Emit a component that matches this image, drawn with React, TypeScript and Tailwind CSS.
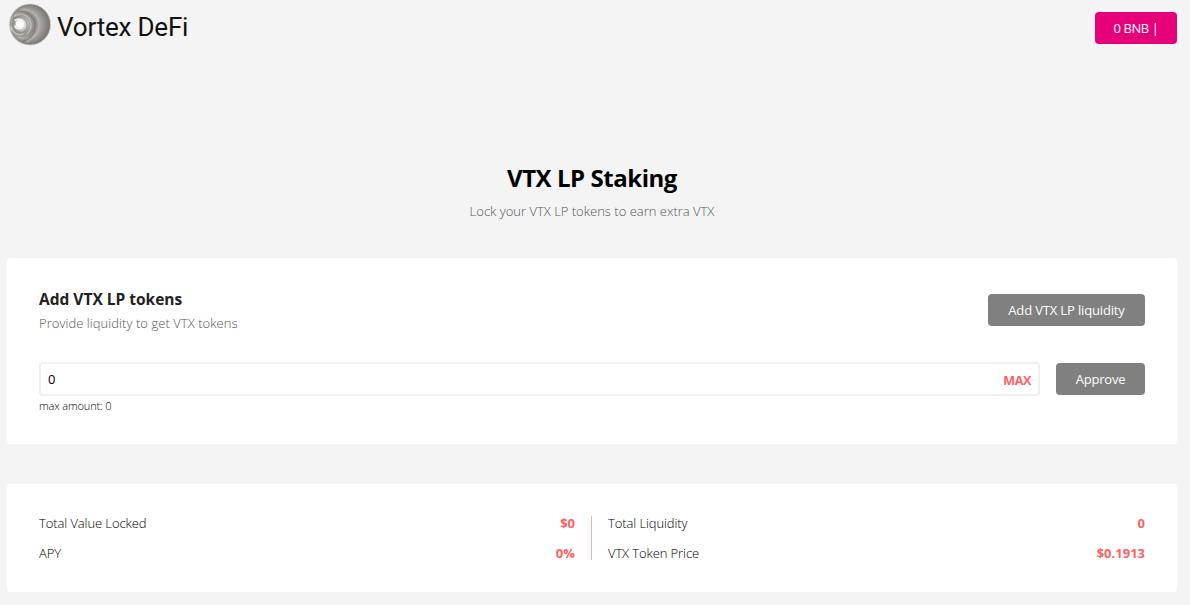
import { useState } from "react";

function Logo() {
  return (
    <svg width="44" height="44" viewBox="0 0 44 44" fill="none">
      <defs>
        <radialGradient id="sphere" cx="21" cy="21.5" r="21" fx="10.5" fy="21" gradientUnits="userSpaceOnUse">
          <stop offset="0" stopColor="#ffffff" />
          <stop offset="0.2" stopColor="#e0dfdc" />
          <stop offset="0.38" stopColor="#a19e9b" />
          <stop offset="0.52" stopColor="#8d8a87" />
          <stop offset="0.68" stopColor="#aaa8a3" />
          <stop offset="0.86" stopColor="#8d8a86" />
          <stop offset="1" stopColor="#777471" />
        </radialGradient>
      </defs>
      <circle cx="22" cy="21.5" r="20.6" fill="url(#sphere)" stroke="#d4d4d4" strokeWidth="0.8" />
      <g strokeLinecap="round" strokeOpacity="0.5">
        <path d="M7 13c8-5 16 1 16 9s-6 12-12 12" stroke="#d9d7d4" strokeWidth="1.6" />
        <path d="M9 9c9-3 18 4 18 13s-5 14-12 16" stroke="#6f6c6a" strokeWidth="1.4" />
        <path d="M14 6c9 0 17 7 17 16s-6 14-12 17" stroke="#c3c0bc" strokeWidth="1.6" />
        <path d="M5 16c6-4 13-1 14 5s-4 10-9 9" stroke="#7c7976" strokeWidth="1.2" />
        <path d="M3 24c1 6 7 9 12 7" stroke="#f0efed" strokeWidth="1.6" />
        <path d="M4 28c4 5 9 7 14 4" stroke="#7c7976" strokeWidth="1.2" />
      </g>
      <path d="M7 17c5-2 9 1 8 5s-7 5-8 1" stroke="#fff" strokeOpacity="0.8" strokeWidth="1.6" strokeLinecap="round" />
      <circle cx="11" cy="21" r="3.2" fill="#fff" fillOpacity="0.9" />
    </svg>
  );
}

function Stat({ label, value }: { label: string; value: string }) {
  return (
    <div className="flex h-[22px] items-center justify-between">
      <span className="font-light tracking-[-0.1px] text-black">{label}</span>
      <span className="font-bold text-[#ff6060]">{value}</span>
    </div>
  );
}

export default function App() {
  const [amount, setAmount] = useState("0");

  return (
    <div className="h-[605px] overflow-hidden bg-[#f4f4f4] pr-[13px] pl-[7px] font-['Open_Sans',sans-serif] text-[13px] leading-5 text-[#222]">
      <header className="flex h-[52px] items-start justify-between">
        <div className="flex items-start gap-[5px] pt-[3px] pl-px">
          <Logo />
          <span className="pt-px font-[Roboto,sans-serif] text-[26px] leading-[46px] tracking-[-0.2px] text-[#111]">
            Vortex DeFi
          </span>
        </div>
        <button className="mt-3 h-8 w-[82px] rounded bg-[#e6007a] tracking-[-0.4px] text-white">0 BNB |</button>
      </header>

      <div className="h-[206px] pt-[110px] text-center">
        <h1 className="text-2xl leading-8 font-bold tracking-[-0.45px] text-black">VTX LP Staking</h1>
        <p className="mt-[7px] font-light text-[#555]">Lock your VTX LP tokens to earn extra VTX</p>
      </div>

      <section className="h-[186px] rounded bg-white px-8 pt-[31px]">
        <div className="flex justify-between">
          <div>
            <h2 className="text-[15.5px] leading-5 font-bold">Add VTX LP tokens</h2>
            <p className="mt-1 font-light tracking-[0.05px] text-[#555]">Provide liquidity to get VTX tokens</p>
          </div>
          <button className="mt-[5px] h-8 w-[157px] rounded bg-[#808080] tracking-[-0.15px] text-white">
            Add VTX LP liquidity
          </button>
        </div>
        <div className="mt-[29px] flex gap-4">
          <div className="flex h-[34px] flex-1 items-center rounded border-2 border-[#f0f0f0] px-[7px]">
            <input
              className="min-w-0 flex-1 text-black outline-none"
              value={amount}
              onChange={(e) => setAmount(e.target.value)}
            />
            <button className="pt-[3px] text-[12.5px] font-bold tracking-[-0.3px] text-[#ff6060]">MAX</button>
          </div>
          <button className="mt-px h-8 w-[89px] rounded bg-[#808080] tracking-[-0.2px] text-white">Approve</button>
        </div>
        <p className="mt-0.5 text-[11px] leading-4 font-light tracking-[-0.15px] text-black">max amount: 0</p>
      </section>

      <section className="mt-10 flex h-[108px] rounded bg-white px-8 pt-7">
        <div className="flex w-[552px] flex-col gap-2 pr-4">
          <Stat label="Total Value Locked" value="$0" />
          <Stat label="APY" value="0%" />
        </div>
        <div className="mt-1 h-11 w-px bg-[#ffaaaa]" />
        <div className="flex flex-1 flex-col gap-2 pl-4">
          <Stat label="Total Liquidity" value="0" />
          <Stat label="VTX Token Price" value="$0.1913" />
        </div>
      </section>
    </div>
  );
}
